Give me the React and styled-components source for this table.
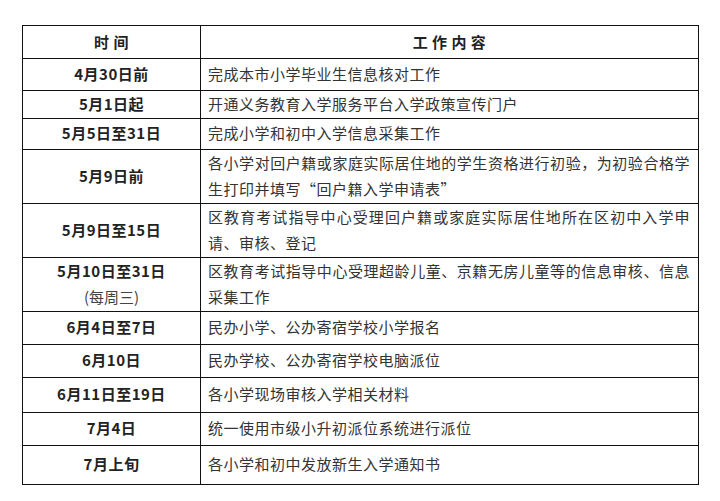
import React from 'react';
import styled, { createGlobalStyle } from 'styled-components';

const GlobalStyle = createGlobalStyle`
  html, body {
    margin: 0;
    padding: 0;
    background: #fff;
  }
  body {
    font-family: "Microsoft YaHei", "Noto Sans CJK SC", "Noto Sans", sans-serif;
    color: #333;
  }
`;

const Page = styled.div`
  padding: 25px 0 0 22px;
`;

const Table = styled.table`
  width: 677px;
  border-collapse: collapse;
  table-layout: fixed;
  font-size: 15px;
  letter-spacing: 0.5px;
  line-height: 26.5px;
`;

const Row = styled.tr`
  height: ${({ h }) => h}px;
`;

const HeadCell = styled.th`
  border: 1px solid #111;
  font-weight: bold;
  color: #222;
  text-align: center;
  vertical-align: middle;
  padding: 0;
  white-space: pre;
`;

const DateCell = styled.td`
  width: 177px;
  border: 1px solid #111;
  text-align: center;
  vertical-align: middle;
  padding: 0;
  font-weight: bold;
  color: #222;
`;

const Note = styled.div`
  font-weight: normal;
  color: #444;
  letter-spacing: 0;
`;

const TaskCell = styled.td`
  border: 1px solid #111;
  text-align: justify;
  vertical-align: middle;
  padding: 0 8px 0 7px;
`;

const rows = [
  { h: 32, date: '4月30日前', task: '完成本市小学毕业生信息核对工作' },
  { h: 27, date: '5月1日起', task: '开通义务教育入学服务平台入学政策宣传门户' },
  { h: 31, date: '5月5日至31日', task: '完成小学和初中入学信息采集工作' },
  { h: 54, date: '5月9日前', task: '各小学对回户籍或家庭实际居住地的学生资格进行初验，为初验合格学生打印并填写“回户籍入学申请表”' },
  { h: 52, date: '5月9日至15日', task: '区教育考试指导中心受理回户籍或家庭实际居住地所在区初中入学申请、审核、登记' },
  { h: 53, date: '5月10日至31日', note: '(每周三)', task: '区教育考试指导中心受理超龄儿童、京籍无房儿童等的信息审核、信息采集工作' },
  { h: 33, date: '6月4日至7日', task: '民办小学、公办寄宿学校小学报名' },
  { h: 33, date: '6月10日', task: '民办学校、公办寄宿学校电脑派位' },
  { h: 35, date: '6月11日至19日', task: '各小学现场审核入学相关材料' },
  { h: 33, date: '7月4日', task: '统一使用市级小升初派位系统进行派位' },
  { h: 39, date: '7月上旬', task: '各小学和初中发放新生入学通知书' },
];

export default function App() {
  return (
    <Page>
      <GlobalStyle />
      <Table>
        <colgroup>
          <col style={{ width: '178px' }} />
          <col />
        </colgroup>
        <thead>
          <Row h={33}>
            <HeadCell>时 间</HeadCell>
            <HeadCell>工 作 内 容</HeadCell>
          </Row>
        </thead>
        <tbody>
          {rows.map((r) => (
            <Row key={r.date} h={r.h}>
              <DateCell>
                {r.date}
                {r.note && <Note>{r.note}</Note>}
              </DateCell>
              <TaskCell>{r.task}</TaskCell>
            </Row>
          ))}
        </tbody>
      </Table>
    </Page>
  );
}
